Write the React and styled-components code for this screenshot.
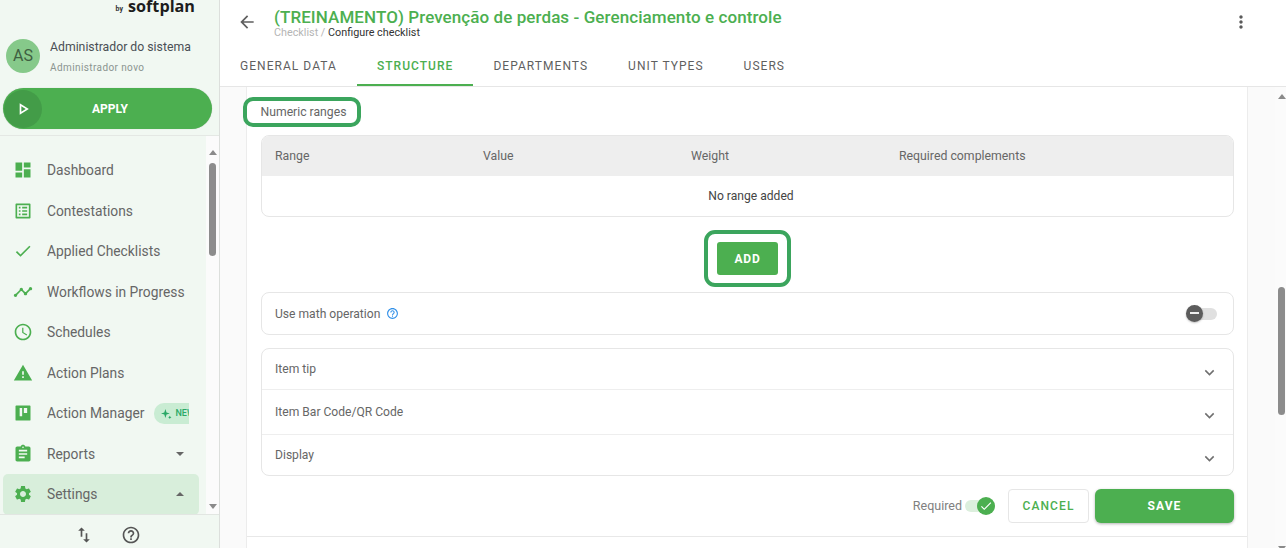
import React from "react";
import styled, { createGlobalStyle } from "styled-components";

const GREEN = "#4caf50";
const RING = "#3ba55d";
const TEXT = "#666666";

const GlobalStyle = createGlobalStyle`
  html, body {
    margin: 0;
    padding: 0;
    height: 100%;
    overflow: hidden;
    background: #fff;
    font-family: Roboto, "Liberation Sans", sans-serif;
  }
  * { box-sizing: border-box; }
`;

const Page = styled.div`
  display: flex;
  width: 1286px;
  height: 548px;
  overflow: hidden;
`;

const Sidebar = styled.aside`
  width: 220px;
  flex: none;
  display: flex;
  flex-direction: column;
  background: #f1f8f2;
  border-right: 1px solid #dcdfdc;
`;

const LogoRow = styled.div`
  height: 23px;
  display: flex;
  justify-content: flex-end;
  align-items: flex-end;
  gap: 5px;
  padding: 0 24px 10px 0;
`;

const LogoBy = styled.span`
  font-size: 7px;
  font-weight: 700;
  color: #333;
  line-height: 8px;
`;

const LogoName = styled.span`
  font-family: "Open Sans", sans-serif;
  font-size: 16.2px;
  font-weight: 700;
  color: #1d1d1d;
  line-height: 13px;
`;

const UserRow = styled.div`
  display: flex;
  align-items: center;
  gap: 10px;
  height: 65px;
  padding: 0 0 0 6px;
`;

const Avatar = styled.div`
  width: 34px;
  height: 34px;
  border-radius: 50%;
  background: #86c98a;
  color: #3f5f41;
  font-size: 16px;
  display: flex;
  align-items: center;
  justify-content: center;
`;

const UserText = styled.div`
  display: flex;
  flex-direction: column;
  gap: 7px;
  padding-top: 2px;
`;

const UserName = styled.div`
  font-size: 12.25px;
  line-height: 15px;
  color: #4a4f55;
`;

const UserRole = styled.div`
  font-size: 10px;
  line-height: 12px;
  letter-spacing: 0.4px;
  color: #8b9490;
`;

const ApplyWrap = styled.div`
  padding: 0 7px 0 3px;
  height: 48px;
  border-bottom: 1px solid #e4e8e4;
`;

const ApplyButton = styled.button`
  display: flex;
  align-items: center;
  width: 100%;
  height: 41px;
  padding: 0;
  border: none;
  border-radius: 21px;
  background: ${GREEN};
  color: #fff;
  font: 700 12px Roboto, sans-serif;
  box-shadow: 0 0 1px rgba(0, 0, 0, 0.25);
`;

const ApplyIcon = styled.span`
  width: 38px;
  height: 38px;
  margin-left: 1px;
  border-radius: 50%;
  background: #439c48;
  display: flex;
  align-items: center;
  justify-content: center;
`;

const ApplyLabel = styled.span`
  flex: 1;
  text-align: center;
  padding-right: 34px;
`;

const NavArea = styled.div`
  flex: 1;
  min-height: 0;
  display: flex;
  overflow: hidden;
`;

const NavList = styled.nav`
  flex: 1;
  min-width: 0;
  padding: 14px 7px 0 3px;
  display: grid;
  grid-template-columns: minmax(0, 1fr);
  grid-auto-rows: 40.5px;
  align-content: start;
  overflow: hidden;
`;

const NavItem = styled.div`
  display: flex;
  align-items: center;
  gap: 14px;
  padding: 0 12px;
  font-size: 13.8px;
  color: ${TEXT};
  border-radius: 5px;
  background: ${({ $active }) => ($active ? "#d8eedb" : "transparent")};
`;

const NavIcon = styled.svg`
  width: 20px;
  height: 20px;
  flex: none;
  fill: ${GREEN};
  margin-left: -2px;
`;

const NavLabel = styled.span`
  white-space: nowrap;
`;

const Caret = styled.span`
  margin-left: auto;
  margin-right: 3px;
  width: 0;
  height: 0;
  border-left: 4.5px solid transparent;
  border-right: 4.5px solid transparent;
  ${({ $up }) =>
    $up ? "border-bottom: 4.5px solid #666;" : "border-top: 4.5px solid #666;"}
`;

const NewBadge = styled.span`
  margin-left: -4px;
  width: 35px;
  height: 21px;
  flex: none;
  overflow: hidden;
  display: flex;
  align-items: center;
  gap: 3px;
  padding-left: 7px;
  border-radius: 10px 0 0 10px;
  background: #c9ecd3;
  color: #2aa866;
  font-size: 9px;
  font-weight: 500;
  white-space: nowrap;

  svg {
    flex: none;
  }
`;

const ScrollTrack = styled.div`
  flex: none;
  width: 13px;
  margin-right: ${({ $shift }) => $shift || 0}px;
  display: flex;
  flex-direction: column;
  align-items: center;
  background: #fbfbfb;
`;

const ArrowUp = styled.span`
  flex: none;
  margin-top: ${({ $top }) => $top}px;
  width: 0;
  height: 0;
  border-left: 4px solid transparent;
  border-right: 4px solid transparent;
  border-bottom: 5px solid #8a8a8a;
`;

const ArrowDown = styled.span`
  flex: none;
  margin-top: auto;
  margin-bottom: ${({ $bottom }) => $bottom}px;
  width: 0;
  height: 0;
  border-left: 4px solid transparent;
  border-right: 4px solid transparent;
  border-top: 5px solid #8a8a8a;
`;

const Thumb = styled.span`
  flex: none;
  width: 7px;
  height: ${({ $h }) => $h}px;
  margin-top: ${({ $top }) => $top}px;
  border-radius: 4px;
  background: #8c8c8c;
`;

const SideFooter = styled.div`
  height: 34px;
  flex: none;
  display: flex;
  align-items: center;
  justify-content: center;
  gap: 27px;
  padding: 6px 4px 0 0;
  border-top: 1px solid #e2e6e2;
`;

const FootIcon = styled.svg`
  width: 20px;
  height: 20px;
  fill: #555;
`;

const Main = styled.main`
  flex: 1;
  min-width: 0;
  display: flex;
  flex-direction: column;
`;

const Header = styled.header`
  flex: none;
  height: 87px;
  background: #fff;
  border-bottom: 1px solid #e6e6e6;
  display: flex;
  flex-direction: column;
`;

const TitleRow = styled.div`
  height: 46px;
  display: flex;
  align-items: flex-start;
  padding: 8px 35px 0 17px;
`;

const BackIcon = styled.svg`
  width: 20px;
  height: 20px;
  fill: #5f5f5f;
  margin-top: 4px;
  flex: none;
`;

const TitleBlock = styled.div`
  margin-left: 17px;
  flex: 1;
`;

const Title = styled.h1`
  margin: 0;
  font-size: 17px;
  line-height: 18px;
  font-weight: 500;
  letter-spacing: 0.08px;
  color: ${GREEN};
  white-space: nowrap;
`;

const Crumbs = styled.div`
  font-size: 10.8px;
  line-height: 12px;
  margin-top: 1px;
  color: #333;
`;

const CrumbMuted = styled.span`
  color: #b5b5b5;
`;

const MoreIcon = styled.svg`
  width: 20px;
  height: 20px;
  fill: #5a5a5a;
  margin-top: 4px;
  flex: none;
`;

const Tabs = styled.div`
  flex: 1;
  display: flex;
`;

const Tab = styled.div`
  display: flex;
  align-items: center;
  justify-content: center;
  height: 41px;
  margin-top: -1px;
  padding: 2px 20px 0;
  font-size: 12px;
  font-weight: ${({ $active }) => ($active ? 500 : 400)};
  letter-spacing: 1.04px;
  color: ${({ $active }) => ($active ? GREEN : "#5f5f5f")};
  border-bottom: 2px solid ${({ $active }) => ($active ? GREEN : "transparent")};
`;

const Body = styled.div`
  flex: 1;
  min-height: 0;
  display: flex;
  background: #fafafa;
`;

const Panel = styled.section`
  flex: none;
  width: 1002px;
  margin-left: 26px;
  padding: 0 13px 0 14px;
  background: #fff;
  border-left: 1px solid #ececec;
  border-right: 1px solid #ececec;
`;

const SectionRow = styled.div`
  display: flex;
  height: 48px;
  padding-top: 11px;
  margin-left: -18px;
`;

const SectionChip = styled.div`
  width: 118px;
  height: 30px;
  margin-top: -1px;
  padding-left: 3px;
  border: 4px solid ${RING};
  border-radius: 10px;
  background: #fff;
  display: flex;
  align-items: center;
  justify-content: center;
  font-size: 12.2px;
  color: ${TEXT};
`;

const Card = styled.div`
  border: 1px solid #e6e6e6;
  border-radius: 8px;
  overflow: hidden;
  background: #fff;
`;

const TableHead = styled.div`
  display: grid;
  grid-template-columns: 208px 208px 208px 1fr;
  align-items: center;
  height: 40px;
  padding: 0 13px;
  background: #eeeeee;
  font-size: 12.3px;
  color: ${TEXT};
`;

const EmptyRow = styled.div`
  height: 40px;
  padding-left: 7px;
  display: flex;
  align-items: center;
  justify-content: center;
  font-size: 12.1px;
  color: #444;
`;

const AddRow = styled.div`
  display: flex;
  justify-content: center;
  margin-top: 13px;
  margin-bottom: 5px;
`;

const AddRing = styled.div`
  width: 87px;
  height: 57px;
  border: 4px solid ${RING};
  border-radius: 11px;
  display: flex;
  align-items: center;
  justify-content: center;
`;

const AddButton = styled.button`
  width: 61px;
  height: 33px;
  border: none;
  border-radius: 3px;
  background: ${GREEN};
  color: #fff;
  font: 700 12px Roboto, sans-serif;
  letter-spacing: 0.8px;
`;

const MathCard = styled(Card)`
  height: 43px;
  display: flex;
  align-items: center;
  padding: 0 16px 0 13px;
  margin-bottom: 13px;
  font-size: 12.1px;
  color: ${TEXT};
`;

const HelpIcon = styled.svg`
  width: 13px;
  height: 13px;
  margin-left: 6px;
  fill: #2f8fe8;
`;

const MathToggle = styled.div`
  margin-left: auto;
  width: 30px;
  height: 12px;
  border-radius: 6px;
  background: #e0e0e0;
  position: relative;
`;

const ToggleKnobOff = styled.span`
  position: absolute;
  left: -1px;
  top: -3px;
  width: 17px;
  height: 17px;
  border-radius: 50%;
  background: #5c5c5c;
  box-shadow: 0 1px 2px rgba(0, 0, 0, 0.25);
  display: flex;
  align-items: center;
  justify-content: center;
`;

const Dash = styled.span`
  width: 9px;
  height: 2px;
  background: #eee;
`;

const AccordionRow = styled.div`
  height: ${({ $h }) => $h}px;
  display: flex;
  align-items: center;
  justify-content: space-between;
  padding: 0 14px 0 13px;
  font-size: 12.1px;
  color: ${TEXT};
  border-top: ${({ $first }) => ($first ? "none" : "1px solid #eeeeee")};
`;

const Chevron = styled.svg`
  width: 19px;
  height: 19px;
  margin-top: 6px;
  fill: #6f6f6f;
  flex: none;
`;

const Actions = styled.div`
  display: flex;
  align-items: center;
  justify-content: flex-end;
  margin-top: 13px;
`;

const RequiredLabel = styled.span`
  font-size: 12.5px;
  margin-top: -1px;
  color: #808080;
`;

const RequiredToggle = styled.div`
  position: relative;
  width: 29px;
  height: 12px;
  margin: 0 14px 0 3px;
  border-radius: 6px;
  background: #dcefdd;
`;

const ToggleKnobOn = styled.span`
  position: absolute;
  right: -1px;
  top: -3px;
  width: 18px;
  height: 18px;
  border-radius: 50%;
  background: ${GREEN};
  display: flex;
  align-items: center;
  justify-content: center;
`;

const CancelButton = styled.button`
  width: 81px;
  height: 34px;
  margin-right: 6px;
  border: 1px solid #e6e6e6;
  border-radius: 4px;
  background: #fff;
  color: ${GREEN};
  font: 500 12px Roboto, sans-serif;
  letter-spacing: 1.1px;
`;

const SaveButton = styled.button`
  width: 139px;
  height: 34px;
  border: none;
  border-radius: 6px;
  background: ${GREEN};
  color: #fff;
  font: 700 12px Roboto, sans-serif;
  letter-spacing: 1.1px;
  box-shadow: 0 1px 3px rgba(0, 0, 0, 0.3);
`;

const PanelDivider = styled.div`
  height: 1px;
  margin: 13px -13px 0 -14px;
  background: #e8e8e8;
`;

const BodyScroll = styled.div`
  flex: 1;
  display: flex;
  justify-content: flex-end;
`;

const nav = [
  { label: "Dashboard", d: "M3 13h8V3H3v10zm0 8h8v-6H3v6zm10 0h8V11h-8v10zm0-18v6h8V3h-8z" },
  { label: "Contestations", d: "M19 5v14H5V5h14m1.1-2H3.9c-.5 0-.9.4-.9.9v16.2c0 .4.4.9.9.9h16.2c.4 0 .9-.5.9-.9V3.9c0-.5-.5-.9-.9-.9zM11 7h6v2h-6V7zm0 4h6v2h-6v-2zm0 4h6v2h-6zM7 7h2v2H7zm0 4h2v2H7zm0 4h2v2H7z" },
  { label: "Applied Checklists", d: "M9 16.17L4.83 12l-1.42 1.41L9 19 21 7l-1.41-1.41z" },
  { label: "Workflows in Progress", d: "M23 8c0 1.1-.9 2-2 2-.18 0-.35-.02-.51-.07l-3.56 3.55c.05.16.07.34.07.52 0 1.1-.9 2-2 2s-2-.9-2-2c0-.18.02-.36.07-.52l-2.55-2.55c-.16.05-.34.07-.52.07s-.36-.02-.52-.07l-4.55 4.56c.05.16.07.33.07.51 0 1.1-.9 2-2 2s-2-.9-2-2 .9-2 2-2c.18 0 .35.02.51.07l4.56-4.55C8.02 9.36 8 9.18 8 9c0-1.1.9-2 2-2s2 .9 2 2c0 .18-.02.36-.07.52l2.55 2.55c.16-.05.34-.07.52-.07s.36.02.52.07l3.55-3.56C19.02 8.35 19 8.18 19 8c0-1.1.9-2 2-2s2 .9 2 2z" },
  { label: "Schedules", d: "M11.99 2C6.47 2 2 6.48 2 12s4.47 10 9.99 10C17.52 22 22 17.52 22 12S17.52 2 11.99 2zM12 20c-4.42 0-8-3.58-8-8s3.58-8 8-8 8 3.58 8 8-3.58 8-8 8zm.5-13H11v6l5.25 3.15.75-1.23-4.5-2.67z" },
  { label: "Action Plans", d: "M1 21h22L12 2 1 21zm12-3h-2v-2h2v2zm0-4h-2v-4h2v4z" },
  { label: "Action Manager", d: "M4 3h16a1 1 0 011 1v16a1 1 0 01-1 1H4a1 1 0 01-1-1V4a1 1 0 011-1zM8 6v10h3V6zm5 0v6h4V6z", badge: true },
  { label: "Reports", d: "M19 3h-4.18C14.4 1.84 13.3 1 12 1c-1.3 0-2.4.84-2.82 2H5c-1.1 0-2 .9-2 2v14c0 1.1.9 2 2 2h14c1.1 0 2-.9 2-2V5c0-1.1-.9-2-2-2zm-7 0c.55 0 1 .45 1 1s-.45 1-1 1-1-.45-1-1 .45-1 1-1zm2 14H7v-2h7v2zm3-4H7v-2h10v2zm0-4H7V7h10v2z", caret: "down" },
  { label: "Settings", d: "M19.14 12.94c.04-.3.06-.61.06-.94 0-.32-.02-.64-.07-.94l2.03-1.58c.18-.14.23-.41.12-.61l-1.92-3.32c-.12-.22-.37-.29-.59-.22l-2.39.96c-.5-.38-1.03-.7-1.62-.94l-.36-2.54c-.04-.24-.24-.41-.48-.41h-3.84c-.24 0-.43.17-.47.41l-.36 2.54c-.59.24-1.13.57-1.62.94l-2.39-.96c-.22-.08-.47 0-.59.22L2.74 8.87c-.12.21-.08.47.12.61l2.03 1.58c-.05.3-.09.63-.09.94s.02.64.07.94l-2.03 1.58c-.18.14-.23.41-.12.61l1.92 3.32c.12.22.37.29.59.22l2.39-.96c.5.38 1.03.7 1.62.94l.36 2.54c.05.24.24.41.48.41h3.84c.24 0 .44-.17.47-.41l.36-2.54c.59-.24 1.13-.56 1.62-.94l2.39.96c.22.08.47 0 .59-.22l1.92-3.32c.12-.22.07-.47-.12-.61l-2.01-1.58zM12 15.6c-1.98 0-3.6-1.62-3.6-3.6s1.62-3.6 3.6-3.6 3.6 1.62 3.6 3.6-1.62 3.6-3.6 3.6z", caret: "up", active: true },
];

const tabs = ["GENERAL DATA", "STRUCTURE", "DEPARTMENTS", "UNIT TYPES", "USERS"];
const HELP_D = "M11 18h2v-2h-2v2zm1-16C6.48 2 2 6.48 2 12s4.48 10 10 10 10-4.48 10-10S17.52 2 12 2zm0 18c-4.41 0-8-3.59-8-8s3.59-8 8-8 8 3.59 8 8-3.59 8-8 8zm0-14c-2.21 0-4 1.79-4 4h2c0-1.1.9-2 2-2s2 .9 2 2c0 2-3 1.75-3 5h2c0-2.25 3-2.5 3-5 0-2.21-1.79-4-4-4z";
const CHEVRON_D = "M16.59 8.59L12 13.17 7.41 8.59 6 10l6 6 6-6z";

const App = () => (
  <>
    <GlobalStyle />
    <Page>
      <Sidebar>
        <LogoRow>
          <LogoBy>by</LogoBy>
          <LogoName>softplan</LogoName>
        </LogoRow>
        <UserRow>
          <Avatar>AS</Avatar>
          <UserText>
            <UserName>Administrador do sistema</UserName>
            <UserRole>Administrador novo</UserRole>
          </UserText>
        </UserRow>
        <ApplyWrap>
          <ApplyButton>
            <ApplyIcon>
              <svg width="20" height="20" viewBox="0 0 24 24" fill="#fff">
                <path d="M10 8.64L15.27 12 10 15.36V8.64M8 5v14l11-7L8 5z" />
              </svg>
            </ApplyIcon>
            <ApplyLabel>APPLY</ApplyLabel>
          </ApplyButton>
        </ApplyWrap>
        <NavArea>
          <NavList>
            {nav.map((item) => (
              <NavItem key={item.label} $active={item.active}>
                <NavIcon viewBox="0 0 24 24">
                  <path d={item.d} fillRule="evenodd" />
                </NavIcon>
                <NavLabel>{item.label}</NavLabel>
                {item.badge && (
                  <NewBadge>
                    <svg width="11" height="11" viewBox="0 0 10 10" fill="#2aa866">
                      <path d="M4 1l1 3 3 1-3 1-1 3-1-3-3-1 3-1zM8 7l.5 1 1 .5-1 .5-.5 1-.5-1-1-.5 1-.5z" />
                    </svg>
                    NEW
                  </NewBadge>
                )}
                {item.caret && <Caret $up={item.caret === "up"} />}
              </NavItem>
            ))}
          </NavList>
          <ScrollTrack>
            <ArrowUp $top={14} />
            <Thumb $top={8} $h={93} />
            <ArrowDown $bottom={5} />
          </ScrollTrack>
        </NavArea>
        <SideFooter>
          <FootIcon viewBox="0 0 24 24">
            <path d="M16 17.01V10h-2v7.01h-3L15 21l4-3.99h-3zM9 3L5 6.99h3V14h2V6.99h3L9 3z" />
          </FootIcon>
          <FootIcon viewBox="0 0 24 24">
            <path d={HELP_D} />
          </FootIcon>
        </SideFooter>
      </Sidebar>
      <Main>
        <Header>
          <TitleRow>
            <BackIcon viewBox="0 0 24 24">
              <path d="M20 11H7.83l5.59-5.59L12 4l-8 8 8 8 1.41-1.41L7.83 13H20v-2z" />
            </BackIcon>
            <TitleBlock>
              <Title>(TREINAMENTO) Prevenção de perdas - Gerenciamento e controle</Title>
              <Crumbs>
                <CrumbMuted>Checklist / </CrumbMuted>Configure checklist
              </Crumbs>
            </TitleBlock>
            <MoreIcon viewBox="0 0 24 24">
              <path d="M12 8c1.1 0 2-.9 2-2s-.9-2-2-2-2 .9-2 2 .9 2 2 2zm0 2c-1.1 0-2 .9-2 2s.9 2 2 2 2-.9 2-2-.9-2-2-2zm0 6c-1.1 0-2 .9-2 2s.9 2 2 2 2-.9 2-2-.9-2-2-2z" />
            </MoreIcon>
          </TitleRow>
          <Tabs>
            {tabs.map((t) => (
              <Tab key={t} $active={t === "STRUCTURE"}>
                {t}
              </Tab>
            ))}
          </Tabs>
        </Header>
        <Body>
          <Panel>
            <SectionRow>
              <SectionChip>Numeric ranges</SectionChip>
            </SectionRow>
            <Card>
              <TableHead>
                <span>Range</span>
                <span>Value</span>
                <span>Weight</span>
                <span>Required complements</span>
              </TableHead>
              <EmptyRow>No range added</EmptyRow>
            </Card>
            <AddRow>
              <AddRing>
                <AddButton>ADD</AddButton>
              </AddRing>
            </AddRow>
            <MathCard>
              Use math operation
              <HelpIcon viewBox="0 0 24 24">
                <path d={HELP_D} />
              </HelpIcon>
              <MathToggle>
                <ToggleKnobOff>
                  <Dash />
                </ToggleKnobOff>
              </MathToggle>
            </MathCard>
            <Card>
              <AccordionRow $h={40} $first>
                Item tip
                <Chevron viewBox="0 0 24 24">
                  <path d={CHEVRON_D} />
                </Chevron>
              </AccordionRow>
              <AccordionRow $h={45}>
                Item Bar Code/QR Code
                <Chevron viewBox="0 0 24 24">
                  <path d={CHEVRON_D} />
                </Chevron>
              </AccordionRow>
              <AccordionRow $h={41}>
                Display
                <Chevron viewBox="0 0 24 24">
                  <path d={CHEVRON_D} />
                </Chevron>
              </AccordionRow>
            </Card>
            <Actions>
              <RequiredLabel>Required</RequiredLabel>
              <RequiredToggle>
                <ToggleKnobOn>
                  <svg width="14" height="14" viewBox="0 0 24 24" fill="#fff">
                    <path d="M9 16.17L4.83 12l-1.42 1.41L9 19 21 7l-1.41-1.41z" />
                  </svg>
                </ToggleKnobOn>
              </RequiredToggle>
              <CancelButton>CANCEL</CancelButton>
              <SaveButton>SAVE</SaveButton>
            </Actions>
            <PanelDivider />
          </Panel>
          <BodyScroll>
            <ScrollTrack $shift={-2}>
              <ArrowUp $top={7} />
              <Thumb $top={188} $h={128} />
              <ArrowDown $bottom={-3} />
            </ScrollTrack>
          </BodyScroll>
        </Body>
      </Main>
    </Page>
  </>
);

export default App;
